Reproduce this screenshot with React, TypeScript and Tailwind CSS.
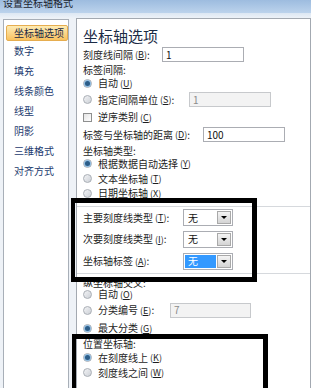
import React from "react";

function K({ k }: { k: string }) {
  return (
    <span className="ml-[2px] text-[9px]">
      (<span className="underline">{k}</span>)
    </span>
  );
}

function Radio({ checked }: { checked?: boolean }) {
  return (
    <span className="flex h-[9px] w-[9px] shrink-0 items-center justify-center rounded-full border border-[#a9aeb5] bg-gradient-to-br from-[#f2f3f5] to-[#cdd1d7]">
      {checked && (
        <span className="h-[5px] w-[5px] rounded-full bg-[#2c5d88] shadow-[0_0_0_1px_#8fbde2]" />
      )}
    </span>
  );
}

function Check() {
  return (
    <span className="h-[9px] w-[9px] shrink-0 border border-[#8e8f8f] bg-gradient-to-br from-[#e4e4e4] to-[#ffffff]" />
  );
}

function Input({ value, disabled, w }: { value: string; disabled?: boolean; w: string }) {
  return (
    <span
      className={
        "flex h-[15px] items-center pl-[3px] text-[10px] " +
        w +
        (disabled
          ? " border border-[#c7c9cc] bg-[#f3f3f3] text-[#8c8c8c]"
          : " border border-[#abadb3] bg-white text-[#111]")
      }
    >
      {value}
    </span>
  );
}

function Select({ hl }: { hl?: boolean }) {
  return (
    <span className="flex h-[17px] w-[50px] items-center border border-[#abadb3] bg-white p-[1px]">
      <span
        className={
          "flex h-full flex-1 items-center pl-[3px] text-[10px] " +
          (hl ? "bg-[#3399ff] text-white" : "text-[#111]")
        }
      >
        无
      </span>
      <span className="ml-[1px] flex h-full w-[14px] items-center justify-center border border-[#a9a9a9] bg-gradient-to-b from-[#f4f4f4] to-[#d4d4d4]">
        <span className="h-0 w-0 border-x-[3px] border-t-[3px] border-x-transparent border-t-black" />
      </span>
    </span>
  );
}

function RadioRow({ h, checked, children }: { h: string; checked?: boolean; children: React.ReactNode }) {
  return (
    <div className={"flex items-center " + h}>
      <Radio checked={checked} />
      <span className="ml-[6px] flex items-center">{children}</span>
    </div>
  );
}

export default function App() {
  const items = ["数字", "填充", "线条颜色", "线型", "阴影", "三维格式", "对齐方式"];
  return (
    <div className="relative h-[388px] w-[311px] overflow-hidden bg-[#eef2f7] font-['Noto_Sans_CJK_SC','Noto_Sans',sans-serif] text-[10px] leading-none text-[#1d1d1d]">
      {/* title bar */}
      <div className="flex h-[13px] items-start bg-gradient-to-b from-[#9dbcdf] to-[#bcd3ec] pl-[3px]">
        <span className="-mt-[2px] text-[10px] leading-[10px] text-[#1b2430]">设置坐标轴格式</span>
      </div>
      <div className="h-[5px] bg-gradient-to-b from-[#dce7f3] to-[#edf2f8]" />

      <div className="flex h-[400px] items-start pl-[3px]">
        {/* left nav */}
        <div className="mt-[1px] h-[400px] w-[70px] border border-[#a8afb8] bg-white pt-[5px] text-[#1c3a6e]">
          <div className="ml-[2px] flex h-[16px] w-[62px] items-center rounded-[2px] border border-[#e6ad4f] bg-gradient-to-b from-[#fdebb3] to-[#f9c25e] pl-[7px] text-[#1c2a44]">
            坐标轴选项
          </div>
          {items.map((t) => (
            <div key={t} className="flex h-[20px] items-center pl-[10px]">
              {t}
            </div>
          ))}
        </div>

        {/* right panel */}
        <div className="ml-[7px] h-[400px] w-[260px] border border-[#a3a9b1] bg-white pl-[6px] pt-[6px]">
          <div className="flex h-[20px] items-center text-[15px] text-[#1b2b45]">坐标轴选项</div>
          <div className="flex h-[19px] items-center">
            <span className="flex w-[79px] items-center">
              刻度线间隔<K k="B" />:
            </span>
            <Input value="1" w="w-[82px]" />
          </div>
          <div className="flex h-[12px] items-center">标签间隔:</div>
          <RadioRow h="h-[14px]" checked>
            自动<K k="U" />
          </RadioRow>
          <div className="flex h-[19px] items-center">
            <Radio />
            <span className="ml-[6px] flex w-[91px] items-center">
              指定间隔单位<K k="S" />:
            </span>
            <Input value="1" disabled w="w-[82px]" />
          </div>
          <div className="flex h-[16px] items-center">
            <Check />
            <span className="ml-[6px] flex items-center">
              逆序类别<K k="C" />
            </span>
          </div>
          <div className="flex h-[19px] items-center">
            <span className="flex w-[120px] items-center">
              标签与坐标轴的距离<K k="D" />:
            </span>
            <Input value="100" w="w-[82px]" />
          </div>
          <div className="flex h-[13px] items-center">坐标轴类型:</div>
          <RadioRow h="h-[13px]" checked>
            根据数据自动选择<K k="Y" />
          </RadioRow>
          <RadioRow h="h-[17px]">
            文本坐标轴<K k="T" />
          </RadioRow>
          <RadioRow h="h-[12px]">
            日期坐标轴<K k="X" />
          </RadioRow>
          <div className="-ml-[6px] h-[8px] border-b border-[#d6d9dd] pt-[3px]" />
          <div className="flex h-[21px] items-center">
            <span className="flex w-[100px] items-center">
              主要刻度线类型<K k="T" />:
            </span>
            <Select />
          </div>
          <div className="flex h-[22px] items-center">
            <span className="flex w-[100px] items-center">
              次要刻度线类型<K k="I" />:
            </span>
            <Select />
          </div>
          <div className="flex h-[22px] items-center">
            <span className="flex w-[100px] items-center">
              坐标轴标签<K k="A" />:
            </span>
            <Select hl />
          </div>
          <div className="-ml-[6px] flex h-[5px] flex-col">
            <div className="h-[1px]" />
            <div className="border-b border-[#d6d9dd]" />
          </div>
          <div className="flex h-[11px] items-center">纵坐标轴交叉:</div>
          <RadioRow h="h-[12px]">
            自动<K k="O" />
          </RadioRow>
          <div className="flex h-[20px] items-center">
            <Radio />
            <span className="ml-[6px] flex w-[72px] items-center">
              分类编号<K k="E" />:
            </span>
            <Input value="7" disabled w="w-[81px]" />
          </div>
          <RadioRow h="h-[16px]" checked>
            最大分类<K k="G" />
          </RadioRow>
          <div className="flex h-[15px] items-center">位置坐标轴:</div>
          <RadioRow h="h-[13px]" checked>
            在刻度线上<K k="K" />
          </RadioRow>
          <RadioRow h="h-[17px]">
            刻度线之间<K k="W" />
          </RadioRow>
        </div>
      </div>

      {/* annotation boxes */}
      <div className="absolute left-[71px] top-[198px] h-[84px] w-[186px] border-[5px] border-l-[4px] border-black" />
      <div className="absolute left-[72px] top-[334px] h-[80px] w-[196px] border-[5px] border-l-[4px] border-black" />
    </div>
  );
}
